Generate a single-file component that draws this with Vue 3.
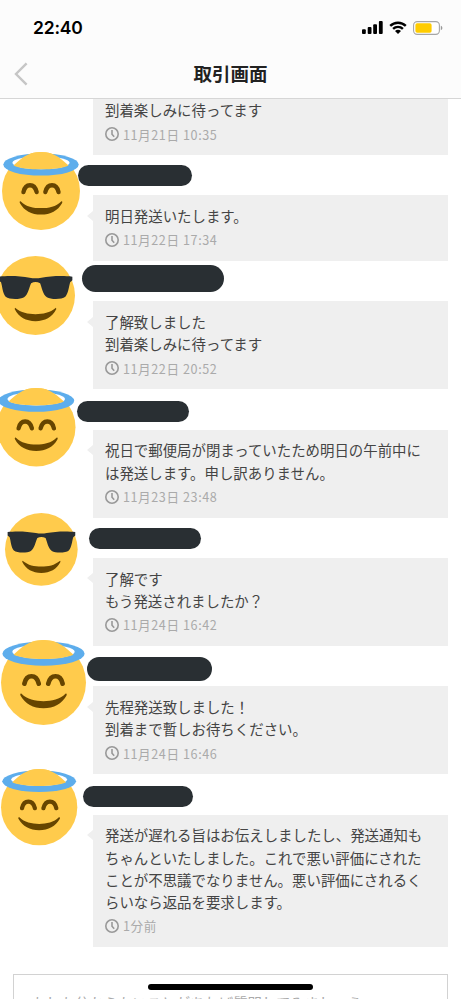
<script setup>
const messages = [
  { lines: ['到着楽しみに待ってます'], time: '11月21日 10:35', cut: true },
  { lines: ['明日発送いたします。'], time: '11月22日 17:34', face: 'halo', f: [1.5, -43, 78], p: [77.7, -30.3, 114.5, 21.5] },
  { lines: ['了解致しました', '到着楽しみに待ってます'], time: '11月22日 20:52', face: 'cool', f: [-3.7, -45.6, 79], p: [82, -36.2, 142, 26.8] },
  { lines: ['祝日で郵便局が閉まっていたため明日の午前中に', 'は発送します。申し訳ありません。'], time: '11月23日 23:48', face: 'halo', f: [-3.5, -41.7, 78.5], p: [77, -29.1, 111.7, 21] },
  { lines: ['了解です', 'もう発送されましたか？'], time: '11月24日 16:42', face: 'cool', f: [4.5, -44.8, 72.7], p: [89, -30.3, 112, 21.3] },
  { lines: ['先程発送致しました！', '到着まで暫しお待ちください。'], time: '11月24日 16:46', face: 'halo', f: [0.9, -46.1, 85], p: [87, -28.8, 125, 24] },
  { lines: ['発送が遅れる旨はお伝えしましたし、発送通知も', 'ちゃんといたしました。これで悪い評価にされた', 'ことが不思議でなりません。悪い評価にされるく', 'らいなら返品を要求します。'], time: '1分前', face: 'halo', f: [0.9, -46, 76.3], p: [83, -28.9, 110, 21] },
]
const box = ([x, y, w, h = w]) => ({ left: x + 'px', top: y + 'px', width: w + 'px', height: h + 'px' })
</script>

<template>
  <div class="screen">
    <header class="top">
      <div class="status">
        <span class="clock">22:40</span>
        <div class="indicators">
          <svg class="signal" viewBox="0 0 21 13">
            <rect x="0" y="8.3" width="3.8" height="4.7" rx="1" />
            <rect x="5.7" y="6" width="3.8" height="7" rx="1" />
            <rect x="11.2" y="3.2" width="3.8" height="9.8" rx="1" />
            <rect x="16.9" y="0" width="3.8" height="13" rx="1" />
          </svg>
          <svg class="wifi" viewBox="0 0 18 13">
            <path d="M1.2 4.9a11.2 11.2 0 0 1 15.6 0M4.1 7.9a7 7 0 0 1 9.8 0" fill="none" stroke="#000" stroke-width="2.4" />
            <path d="M9 13L6 10.1a4.3 4.3 0 0 1 6 0z" />
          </svg>
          <svg class="battery" viewBox="0 0 30 14">
            <rect x=".6" y=".6" width="25.8" height="12.8" rx="3.6" fill="#fff" stroke="#a6a6a6" stroke-width="1.1" />
            <rect x="2.4" y="2.3" width="16.2" height="9.4" rx="1.8" fill="#fc0" />
            <path d="M27.8 4.8c2.1.7 2.1 3.7 0 4.4z" fill="#999" />
          </svg>
        </div>
      </div>
      <nav class="nav">
        <svg class="back" viewBox="0 0 14 24"><path d="M12.6 1.3L2 12l10.6 10.7" fill="none" stroke="#c6c6c6" stroke-width="2.4" /></svg>
        <h1>取引画面</h1>
      </nav>
    </header>

    <main class="thread">
      <article v-for="(m, i) in messages" :key="i" class="message" :class="{ cut: m.cut }">
        <div class="bubble">
          <p v-for="(l, k) in m.lines" :key="k">{{ l }}</p>
          <div class="time">
            <svg viewBox="0 0 14 14"><circle cx="7" cy="7" r="6.2" /><path d="M7 3v4.2l2.2 2.6" /></svg>
            <span>{{ m.time }}</span>
          </div>
        </div>
        <template v-if="m.face">
          <i class="pill" :style="box(m.p)"></i>
          <svg class="face" :style="box(m.f)" viewBox="0 0 36 36">
            <circle cx="18" cy="18" r="18" fill="#ffcb4c" />
            <template v-if="m.face === 'halo'">
              <ellipse cx="18" cy="5.8" rx="17.4" ry="5.1" fill="#5dadec" />
              <ellipse cx="18" cy="5" rx="13.2" ry="3" fill="#fff" />
              <path d="M5.3 6.2C8.3 3.6 11.500 0 18 0S27.700 3.600 30.700 6.200C28 7.400 23.500 8 18 8S8 7.400 5.300 6.200Z" fill="#ffcb4c" />
              <path d="M9.900 18.500C10.800 14.300 15 14.300 16 18.500M20 18.500C21 14.300 25.200 14.300 26.100 18.500" fill="none" stroke="#664500" stroke-width="2" stroke-linecap="round" />
              <path d="M8.700 22.800C11 25.200 14.500 25.900 18 25.900S25 25.200 27.300 22.800C27.800 22.500 28 23 27.700 23.600C25.800 27 22.400 28.900 18 28.900S10.200 27 8.300 23.600C8 23 8.200 22.500 8.700 22.800Z" fill="#664500" />
            </template>
            <template v-else>
              <path d="M1.300 9.400C5 8.900 11 9 15.300 9.900Q18 10.400 20.700 9.900C25 9 31 8.900 34.800 9.400V11.100L33.800 12C33.200 14 33 17 31.600 18.600C30 19.900 25 19.900 23.200 18.800C21.300 17.500 20.800 14 20.100 12.400Q18 11.300 16 12.400C15.200 14 14.700 17.500 12.800 18.800C11 19.900 6 19.900 4.400 18.600C3 17 2.900 14 2.300 12L1.300 11.100Z" fill="#292f33" />
              <path d="M8.700 23.600C11.500 25.900 14.500 26.500 18 26.500S24.500 25.900 27.300 23.600L27.500 24.200C25.500 28 22.400 29.700 18 29.700S10.500 28 8.500 24.200Z" fill="#664500" />
            </template>
          </svg>
        </template>
      </article>
    </main>

    <div class="composer">もしも分からないことがあれば質問してみましょう</div>
    <div class="home"></div>
  </div>
</template>

<style>
body { margin: 0; background: #fff; }
</style>

<style scoped>
.screen { position: relative; display: flex; flex-direction: column; width: 461px; height: 999px; overflow: hidden; background: #fff; font-family: "Noto Sans CJK JP", sans-serif; }
.top { box-sizing: border-box; flex: none; height: 99px; background: #fcfcfc; border-bottom: 1.5px solid #d6d6d6; }
.status { display: flex; justify-content: space-between; align-items: center; height: 55px; padding: 0 18px 0 33px; }
.clock { font: 600 17.5px/22px Inter, sans-serif; letter-spacing: -.2px; color: #000; }
.indicators { display: flex; align-items: center; gap: 6px; }
.signal { width: 21px; height: 13px; }
.wifi { width: 18px; height: 13px; }
.battery { width: 30px; height: 14px; }
.nav { display: grid; grid-template-columns: 1fr auto 1fr; align-items: center; height: 37px; padding: 0 14px; }
.back { width: 14px; height: 24px; }
h1 { margin: -2px 0 0; font-size: 18.5px; line-height: 28px; font-weight: 700; color: #222; }
.thread { flex: none; display: flex; flex-direction: column; gap: 40.3px; padding-left: 92.7px; width: 355.6px; }
.message { position: relative; margin-left: -92.7px; padding-left: 92.7px; }
.bubble { position: relative; box-sizing: border-box; padding: 9.8px 12.3px 8.4px; background: #efefef; }
.cut .bubble { padding-top: .3px; padding-bottom: 8px; }
.bubble::before { content: ""; position: absolute; left: -6px; top: 15.5px; border: solid transparent; border-width: 5px 6px 5px 0; border-right-color: #efefef; }
.cut .bubble::before { display: none; }
p { margin: 0; font-size: 14.43px; line-height: 22.15px; color: #444; white-space: nowrap; }
.time { display: flex; align-items: center; gap: 4px; height: 25.5px; font-size: 12.6px; line-height: 19px; letter-spacing: .58px; color: #aaa; }
.time svg { width: 14px; height: 14px; fill: none; stroke: #999; stroke-width: 1.6; }
.pill { position: absolute; border-radius: 99px; background: #292f33; }
.face { position: absolute; overflow: visible; }
.composer { box-sizing: border-box; flex: none; margin: 27.3px 12.7px 0; height: 60px; padding: 16px 18px; border: 1.5px solid #d2d2d2; font-size: 14.4px; line-height: 24px; color: #aaa; white-space: nowrap; }
.home { position: absolute; left: 148px; bottom: 9px; width: 165px; height: 6px; border-radius: 3px; background: #000; }
</style>
